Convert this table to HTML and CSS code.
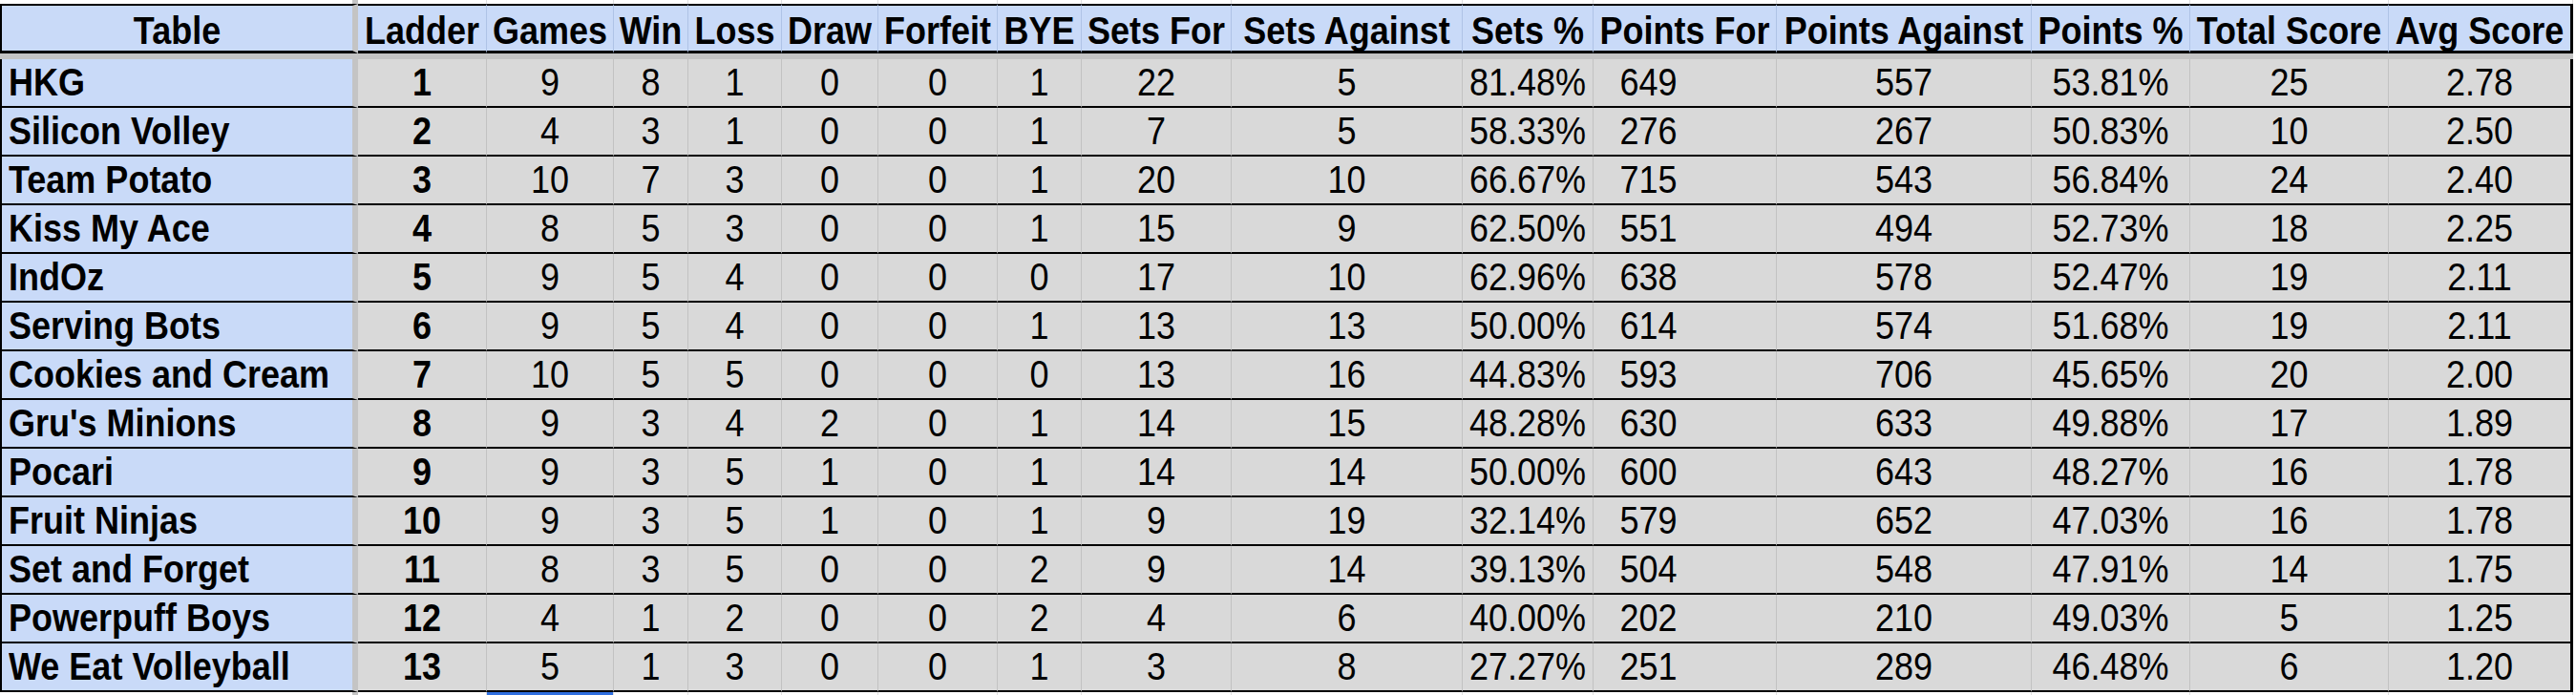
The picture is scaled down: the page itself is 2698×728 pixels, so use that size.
FILE: index.html
```html
<!DOCTYPE html>
<html lang="en">
<head>
<meta charset="utf-8">
<title>Ladder Table</title>
<link rel="stylesheet" href="styles.css">
</head>
<body>
<div class="sheet">
  <div class="row strip">
    <div class="cell first"></div><div class="cell"></div><div class="cell"></div><div class="cell"></div><div class="cell"></div><div class="cell"></div><div class="cell"></div><div class="cell"></div><div class="cell"></div><div class="cell"></div><div class="cell"></div><div class="cell"></div><div class="cell"></div><div class="cell"></div><div class="cell"></div><div class="cell"></div>
  </div>
  <div class="row head">
    <div class="cell first"><span class="t">Table</span></div><div class="cell"><span class="t">Ladder</span></div><div class="cell"><span class="t">Games</span></div><div class="cell"><span class="t">Win</span></div><div class="cell"><span class="t">Loss</span></div><div class="cell"><span class="t">Draw</span></div><div class="cell"><span class="t">Forfeit</span></div><div class="cell"><span class="t">BYE</span></div><div class="cell"><span class="t">Sets For</span></div><div class="cell"><span class="t">Sets Against</span></div><div class="cell"><span class="t">Sets %</span></div><div class="cell"><span class="t">Points For</span></div><div class="cell"><span class="t">Points Against</span></div><div class="cell"><span class="t">Points %</span></div><div class="cell"><span class="t">Total Score</span></div><div class="cell end"><span class="t">Avg Score</span></div>
  </div>
  <div class="band"></div>
  <div class="row data">
    <div class="cell first"><span class="t">HKG</span></div><div class="cell rank"><span class="t">1</span></div><div class="cell"><span class="t">9</span></div><div class="cell"><span class="t">8</span></div><div class="cell"><span class="t">1</span></div><div class="cell"><span class="t">0</span></div><div class="cell"><span class="t">0</span></div><div class="cell"><span class="t">1</span></div><div class="cell"><span class="t">22</span></div><div class="cell"><span class="t">5</span></div><div class="cell"><span class="t">81.48%</span></div><div class="cell pf"><span class="t">649</span></div><div class="cell"><span class="t">557</span></div><div class="cell"><span class="t">53.81%</span></div><div class="cell"><span class="t">25</span></div><div class="cell end"><span class="t">2.78</span></div>
  </div>
  <div class="row data">
    <div class="cell first"><span class="t">Silicon Volley</span></div><div class="cell rank"><span class="t">2</span></div><div class="cell"><span class="t">4</span></div><div class="cell"><span class="t">3</span></div><div class="cell"><span class="t">1</span></div><div class="cell"><span class="t">0</span></div><div class="cell"><span class="t">0</span></div><div class="cell"><span class="t">1</span></div><div class="cell"><span class="t">7</span></div><div class="cell"><span class="t">5</span></div><div class="cell"><span class="t">58.33%</span></div><div class="cell pf"><span class="t">276</span></div><div class="cell"><span class="t">267</span></div><div class="cell"><span class="t">50.83%</span></div><div class="cell"><span class="t">10</span></div><div class="cell end"><span class="t">2.50</span></div>
  </div>
  <div class="row data">
    <div class="cell first"><span class="t">Team Potato</span></div><div class="cell rank"><span class="t">3</span></div><div class="cell"><span class="t">10</span></div><div class="cell"><span class="t">7</span></div><div class="cell"><span class="t">3</span></div><div class="cell"><span class="t">0</span></div><div class="cell"><span class="t">0</span></div><div class="cell"><span class="t">1</span></div><div class="cell"><span class="t">20</span></div><div class="cell"><span class="t">10</span></div><div class="cell"><span class="t">66.67%</span></div><div class="cell pf"><span class="t">715</span></div><div class="cell"><span class="t">543</span></div><div class="cell"><span class="t">56.84%</span></div><div class="cell"><span class="t">24</span></div><div class="cell end"><span class="t">2.40</span></div>
  </div>
  <div class="row data">
    <div class="cell first"><span class="t">Kiss My Ace</span></div><div class="cell rank"><span class="t">4</span></div><div class="cell"><span class="t">8</span></div><div class="cell"><span class="t">5</span></div><div class="cell"><span class="t">3</span></div><div class="cell"><span class="t">0</span></div><div class="cell"><span class="t">0</span></div><div class="cell"><span class="t">1</span></div><div class="cell"><span class="t">15</span></div><div class="cell"><span class="t">9</span></div><div class="cell"><span class="t">62.50%</span></div><div class="cell pf"><span class="t">551</span></div><div class="cell"><span class="t">494</span></div><div class="cell"><span class="t">52.73%</span></div><div class="cell"><span class="t">18</span></div><div class="cell end"><span class="t">2.25</span></div>
  </div>
  <div class="row data">
    <div class="cell first"><span class="t">IndOz</span></div><div class="cell rank"><span class="t">5</span></div><div class="cell"><span class="t">9</span></div><div class="cell"><span class="t">5</span></div><div class="cell"><span class="t">4</span></div><div class="cell"><span class="t">0</span></div><div class="cell"><span class="t">0</span></div><div class="cell"><span class="t">0</span></div><div class="cell"><span class="t">17</span></div><div class="cell"><span class="t">10</span></div><div class="cell"><span class="t">62.96%</span></div><div class="cell pf"><span class="t">638</span></div><div class="cell"><span class="t">578</span></div><div class="cell"><span class="t">52.47%</span></div><div class="cell"><span class="t">19</span></div><div class="cell end"><span class="t">2.11</span></div>
  </div>
  <div class="row data">
    <div class="cell first"><span class="t">Serving Bots</span></div><div class="cell rank"><span class="t">6</span></div><div class="cell"><span class="t">9</span></div><div class="cell"><span class="t">5</span></div><div class="cell"><span class="t">4</span></div><div class="cell"><span class="t">0</span></div><div class="cell"><span class="t">0</span></div><div class="cell"><span class="t">1</span></div><div class="cell"><span class="t">13</span></div><div class="cell"><span class="t">13</span></div><div class="cell"><span class="t">50.00%</span></div><div class="cell pf"><span class="t">614</span></div><div class="cell"><span class="t">574</span></div><div class="cell"><span class="t">51.68%</span></div><div class="cell"><span class="t">19</span></div><div class="cell end"><span class="t">2.11</span></div>
  </div>
  <div class="row data">
    <div class="cell first"><span class="t">Cookies and Cream</span></div><div class="cell rank"><span class="t">7</span></div><div class="cell"><span class="t">10</span></div><div class="cell"><span class="t">5</span></div><div class="cell"><span class="t">5</span></div><div class="cell"><span class="t">0</span></div><div class="cell"><span class="t">0</span></div><div class="cell"><span class="t">0</span></div><div class="cell"><span class="t">13</span></div><div class="cell"><span class="t">16</span></div><div class="cell"><span class="t">44.83%</span></div><div class="cell pf"><span class="t">593</span></div><div class="cell"><span class="t">706</span></div><div class="cell"><span class="t">45.65%</span></div><div class="cell"><span class="t">20</span></div><div class="cell end"><span class="t">2.00</span></div>
  </div>
  <div class="row data">
    <div class="cell first"><span class="t">Gru's Minions</span></div><div class="cell rank"><span class="t">8</span></div><div class="cell"><span class="t">9</span></div><div class="cell"><span class="t">3</span></div><div class="cell"><span class="t">4</span></div><div class="cell"><span class="t">2</span></div><div class="cell"><span class="t">0</span></div><div class="cell"><span class="t">1</span></div><div class="cell"><span class="t">14</span></div><div class="cell"><span class="t">15</span></div><div class="cell"><span class="t">48.28%</span></div><div class="cell pf"><span class="t">630</span></div><div class="cell"><span class="t">633</span></div><div class="cell"><span class="t">49.88%</span></div><div class="cell"><span class="t">17</span></div><div class="cell end"><span class="t">1.89</span></div>
  </div>
  <div class="row data">
    <div class="cell first"><span class="t">Pocari</span></div><div class="cell rank"><span class="t">9</span></div><div class="cell"><span class="t">9</span></div><div class="cell"><span class="t">3</span></div><div class="cell"><span class="t">5</span></div><div class="cell"><span class="t">1</span></div><div class="cell"><span class="t">0</span></div><div class="cell"><span class="t">1</span></div><div class="cell"><span class="t">14</span></div><div class="cell"><span class="t">14</span></div><div class="cell"><span class="t">50.00%</span></div><div class="cell pf"><span class="t">600</span></div><div class="cell"><span class="t">643</span></div><div class="cell"><span class="t">48.27%</span></div><div class="cell"><span class="t">16</span></div><div class="cell end"><span class="t">1.78</span></div>
  </div>
  <div class="row data">
    <div class="cell first"><span class="t">Fruit Ninjas</span></div><div class="cell rank"><span class="t">10</span></div><div class="cell"><span class="t">9</span></div><div class="cell"><span class="t">3</span></div><div class="cell"><span class="t">5</span></div><div class="cell"><span class="t">1</span></div><div class="cell"><span class="t">0</span></div><div class="cell"><span class="t">1</span></div><div class="cell"><span class="t">9</span></div><div class="cell"><span class="t">19</span></div><div class="cell"><span class="t">32.14%</span></div><div class="cell pf"><span class="t">579</span></div><div class="cell"><span class="t">652</span></div><div class="cell"><span class="t">47.03%</span></div><div class="cell"><span class="t">16</span></div><div class="cell end"><span class="t">1.78</span></div>
  </div>
  <div class="row data">
    <div class="cell first"><span class="t">Set and Forget</span></div><div class="cell rank"><span class="t">11</span></div><div class="cell"><span class="t">8</span></div><div class="cell"><span class="t">3</span></div><div class="cell"><span class="t">5</span></div><div class="cell"><span class="t">0</span></div><div class="cell"><span class="t">0</span></div><div class="cell"><span class="t">2</span></div><div class="cell"><span class="t">9</span></div><div class="cell"><span class="t">14</span></div><div class="cell"><span class="t">39.13%</span></div><div class="cell pf"><span class="t">504</span></div><div class="cell"><span class="t">548</span></div><div class="cell"><span class="t">47.91%</span></div><div class="cell"><span class="t">14</span></div><div class="cell end"><span class="t">1.75</span></div>
  </div>
  <div class="row data">
    <div class="cell first"><span class="t">Powerpuff Boys</span></div><div class="cell rank"><span class="t">12</span></div><div class="cell"><span class="t">4</span></div><div class="cell"><span class="t">1</span></div><div class="cell"><span class="t">2</span></div><div class="cell"><span class="t">0</span></div><div class="cell"><span class="t">0</span></div><div class="cell"><span class="t">2</span></div><div class="cell"><span class="t">4</span></div><div class="cell"><span class="t">6</span></div><div class="cell"><span class="t">40.00%</span></div><div class="cell pf"><span class="t">202</span></div><div class="cell"><span class="t">210</span></div><div class="cell"><span class="t">49.03%</span></div><div class="cell"><span class="t">5</span></div><div class="cell end"><span class="t">1.25</span></div>
  </div>
  <div class="row data">
    <div class="cell first"><span class="t">We Eat Volleyball</span></div><div class="cell rank"><span class="t">13</span></div><div class="cell"><span class="t">5</span></div><div class="cell"><span class="t">1</span></div><div class="cell"><span class="t">3</span></div><div class="cell"><span class="t">0</span></div><div class="cell"><span class="t">0</span></div><div class="cell"><span class="t">1</span></div><div class="cell"><span class="t">3</span></div><div class="cell"><span class="t">8</span></div><div class="cell"><span class="t">27.27%</span></div><div class="cell pf"><span class="t">251</span></div><div class="cell"><span class="t">289</span></div><div class="cell"><span class="t">46.48%</span></div><div class="cell"><span class="t">6</span></div><div class="cell end"><span class="t">1.20</span></div>
  </div>
  <div class="row strip">
    <div class="cell first"></div><div class="cell"></div><div class="cell active"></div><div class="cell"></div><div class="cell"></div><div class="cell"></div><div class="cell"></div><div class="cell"></div><div class="cell"></div><div class="cell"></div><div class="cell"></div><div class="cell"></div><div class="cell"></div><div class="cell"></div><div class="cell"></div><div class="cell"></div>
  </div>
</div>
</body>
</html>
```
FILE: styles.css
```css
html, body {
  margin: 0;
  padding: 0;
  background: #ffffff;
}

body {
  font-family: "Liberation Sans", Arial, sans-serif;
  color: #000000;
}

.sheet {
  display: grid;
  width: 2695px;
  grid-template-columns: 375px 135px 133px 78px 98px 101px 125px 88px 157px 242px 137px 192px 267px 166px 208px 193px;
  grid-template-rows: 4px 52px 6px repeat(13, 51px) 3px;
}

.row {
  display: contents;
}

.cell {
  box-sizing: border-box;
  display: flex;
  align-items: flex-end;
  justify-content: center;
  overflow: hidden;
  white-space: nowrap;
  font-size: 36px;
  line-height: 41px;
  padding: 0 0 3px 0;
  background: #d9d9d9;
  border-right: 1px solid #c2c2c2;
  border-bottom: 2px solid #000000;
}

.t {
  display: block;
  transform: scaleY(1.12);
  transform-origin: 50% 80%;
}

.cell.first {
  justify-content: flex-start;
  padding-left: 7px;
  background: #c9daf8;
  border-left: 2px solid #000000;
  border-right: 6px solid #c4c4c4;
  font-weight: bold;
}

.cell.end {
  border-right: 3px solid #000000;
}

.rank {
  font-weight: bold;
}

.pf {
  padding-right: 76px;
}

.head .cell {
  background: #c9daf8;
  font-weight: bold;
  line-height: 38px;
  padding-bottom: 0;
  border-top: 2px solid #000000;
  border-bottom: 3px solid #000000;
  border-right-color: #afc3e6;
}

.head .cell.first {
  justify-content: center;
  padding-left: 0;
  border-right: 6px solid #c4c4c4;
}

.head .cell.end {
  border-right: 3px solid #000000;
}

.band {
  grid-column: 1 / -1;
  background: #c4c4c4;
}

.strip .cell {
  background: #ffffff;
  border-bottom: 0;
  border-left: 0;
  padding: 0;
  border-right: 1px solid #e0e0e0;
}

.strip .cell.first {
  border-right: 6px solid #c4c4c4;
}

.strip .cell.active {
  background: #2f6fe0;
}
```
